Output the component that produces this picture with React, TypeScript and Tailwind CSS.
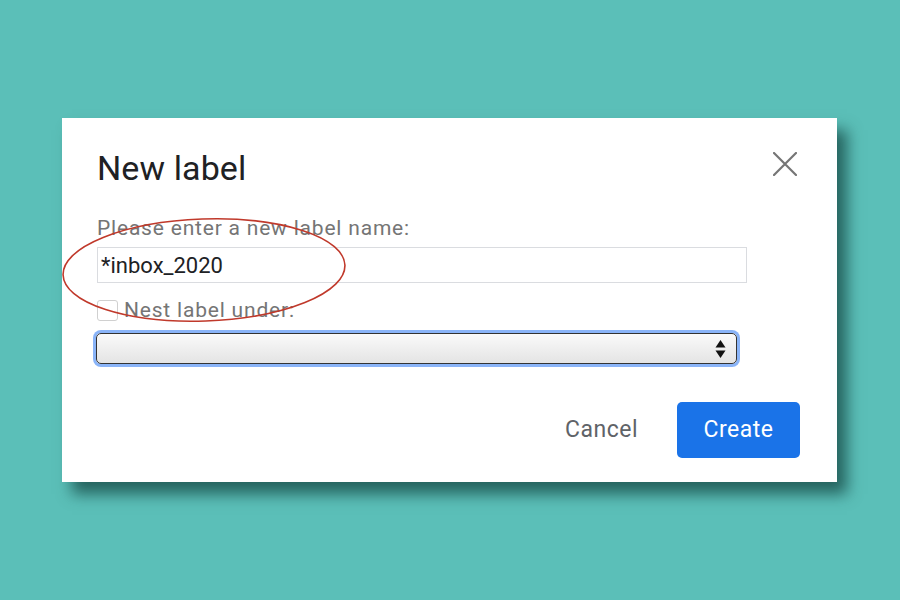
import type { FC } from "react";

const CloseIcon: FC = () => (
  <svg width="24" height="24" viewBox="0 0 24 24" fill="none">
    <path d="M1 1L23 23M23 1L1 23" stroke="#757575" strokeWidth="2.2" strokeLinecap="round" />
  </svg>
);

const SelectArrows: FC = () => (
  <svg width="11" height="20" viewBox="0 0 11 20">
    <path d="M5.5 1L10.5 8.5H0.5Z" fill="#111" />
    <path d="M5.5 19L10.5 11.5H0.5Z" fill="#111" />
  </svg>
);

const App: FC = () => {
  return (
    <div
      className="relative w-[900px] h-[600px] bg-[#5bbfb8] pt-[118px] pl-[62px] overflow-hidden"
      style={{ fontFamily: "Roboto, 'Liberation Sans', sans-serif" }}
    >
      <div className="relative w-[775px] h-[364px] bg-white shadow-[10px_12px_14px_rgba(20,70,66,0.75)] pl-[35px] pr-[40px] pt-[30px] flex flex-col">
        <div className="flex items-start justify-between">
          <h1 className="text-[34px] leading-[40px] text-[#202124] tracking-[0.1px]">New label</h1>
          <button type="button" className="mt-[4px]">
            <CloseIcon />
          </button>
        </div>
        <div className="mt-[28px] text-[21px] leading-[24px] text-[#757575] tracking-[0.8px]">
          Please enter a new label name:
        </div>
        <div className="mt-[7px] w-[650px] h-[36px] border border-[#dadce0] flex items-center pl-[3px] text-[22px] text-[#202124]">
          *inbox_2020
        </div>
        <div className="mt-[15px] h-[24px] flex items-center gap-[6px]">
          <span className="w-[21px] h-[21px] border border-[#d0d0d0] rounded-[3px] bg-white" />
          <span className="text-[21px] leading-[24px] text-[#757575] tracking-[0.8px]">Nest label under:</span>
        </div>
        <div className="mt-[11px] -ml-[1px] w-[641px] h-[31px] rounded-[5px] border border-[#333] bg-gradient-to-b from-[#fafafa] to-[#e4e4e4] ring-[3px] ring-[#8ab4f8] flex items-center justify-end pr-[10px]">
          <SelectArrows />
        </div>
        <div className="mt-[38px] flex items-center justify-end gap-[39px] -mr-[3px]">
          <button type="button" className="text-[23px] text-[#5f6368] tracking-[0.5px]">Cancel</button>
          <button
            type="button"
            className="w-[123px] h-[56px] rounded-[5px] bg-[#1a73e8] text-white text-[23px] tracking-[0.5px]"
          >
            Create
          </button>
        </div>
      </div>
      <svg className="absolute left-0 top-0 pointer-events-none" width="900" height="600">
        <ellipse cx="204" cy="270" rx="141" ry="51" fill="none" stroke="#c0392b" strokeWidth="1.6" transform="rotate(-2 204 270)" />
      </svg>
    </div>
  );
};

export default App;
